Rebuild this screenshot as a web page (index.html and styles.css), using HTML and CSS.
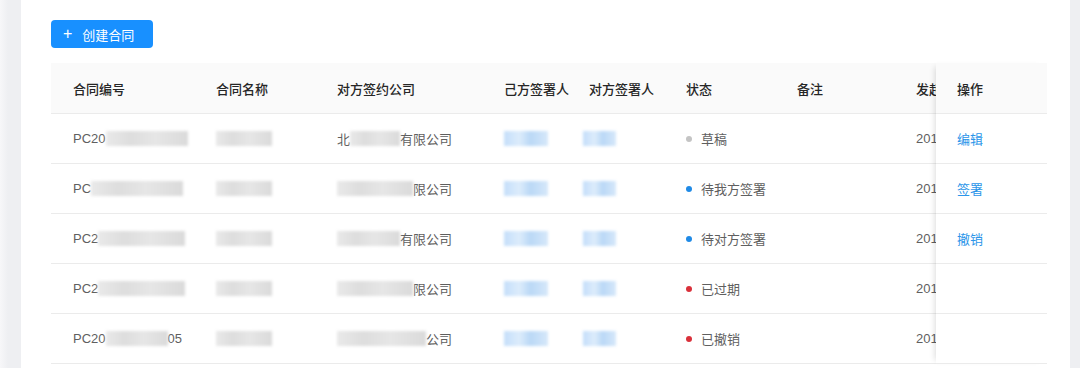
FILE: index.html
```html
<!DOCTYPE html>
<html>
<head>
	<title>合同列表</title>
	<link rel="stylesheet" href="styles.css">
</head>
<body>
<div class="card">
	<button class="btn-primary"><span class="plus">+</span>创建合同</button>

	<div class="table">
		<div class="table-main">
			<div class="row head">
				<div class="c c1">合同编号</div>
				<div class="c c2">合同名称</div>
				<div class="c c3">对方签约公司</div>
				<div class="c c4">己方签署人</div>
				<div class="c c5">对方签署人</div>
				<div class="c c6">状态</div>
				<div class="c c7">备注</div>
				<div class="c c8">发起时间</div>
			</div>
			<div class="row">
				<div class="c c1">PC20<span class="blur gray" style="width:82px"></span></div>
				<div class="c c2"><span class="blur gray" style="width:56px"></span></div>
				<div class="c c3">北<span class="blur gray" style="width:50px"></span>有限公司</div>
				<div class="c c4"><span class="blur blue" style="width:44px"></span></div>
				<div class="c c5"><span class="blur blue shift" style="width:33px"></span></div>
				<div class="c c6"><span class="dot draft"></span>草稿</div>
				<div class="c c7"></div>
				<div class="c c8">2019-03-12</div>
			</div>
			<div class="row">
				<div class="c c1">PC<span class="blur gray" style="width:92px"></span></div>
				<div class="c c2"><span class="blur gray" style="width:56px"></span></div>
				<div class="c c3"><span class="blur gray" style="width:76px"></span>限公司</div>
				<div class="c c4"><span class="blur blue" style="width:44px"></span></div>
				<div class="c c5"><span class="blur blue shift" style="width:33px"></span></div>
				<div class="c c6"><span class="dot wait"></span>待我方签署</div>
				<div class="c c7"></div>
				<div class="c c8">2019-03-11</div>
			</div>
			<div class="row">
				<div class="c c1">PC2<span class="blur gray" style="width:87px"></span></div>
				<div class="c c2"><span class="blur gray" style="width:56px"></span></div>
				<div class="c c3"><span class="blur gray" style="width:63px"></span>有限公司</div>
				<div class="c c4"><span class="blur blue" style="width:44px"></span></div>
				<div class="c c5"><span class="blur blue shift" style="width:33px"></span></div>
				<div class="c c6"><span class="dot wait"></span>待对方签署</div>
				<div class="c c7"></div>
				<div class="c c8">2019-03-10</div>
			</div>
			<div class="row">
				<div class="c c1">PC2<span class="blur gray" style="width:87px"></span></div>
				<div class="c c2"><span class="blur gray" style="width:56px"></span></div>
				<div class="c c3"><span class="blur gray" style="width:76px"></span>限公司</div>
				<div class="c c4"><span class="blur blue" style="width:44px"></span></div>
				<div class="c c5"><span class="blur blue shift" style="width:33px"></span></div>
				<div class="c c6"><span class="dot over"></span>已过期</div>
				<div class="c c7"></div>
				<div class="c c8">2019-02-28</div>
			</div>
			<div class="row">
				<div class="c c1">PC20<span class="blur gray" style="width:62px"></span>05</div>
				<div class="c c2"><span class="blur gray" style="width:56px"></span></div>
				<div class="c c3"><span class="blur gray" style="width:89px"></span>公司</div>
				<div class="c c4"><span class="blur blue" style="width:44px"></span></div>
				<div class="c c5"><span class="blur blue shift" style="width:33px"></span></div>
				<div class="c c6"><span class="dot over"></span>已撤销</div>
				<div class="c c7"></div>
				<div class="c c8">2019-02-20</div>
			</div>
		</div>

		<div class="table-fixed">
			<div class="row head"><div class="c">操作</div></div>
			<div class="row"><div class="c"><a class="link">编辑</a></div></div>
			<div class="row"><div class="c"><a class="link">签署</a></div></div>
			<div class="row"><div class="c"><a class="link">撤销</a></div></div>
			<div class="row"><div class="c"></div></div>
			<div class="row"><div class="c"></div></div>
		</div>
	</div>
</div>
</body>
</html>
```

FILE: styles.css
```css
html, body{
	margin: 0;
	height: 100%;
}
body{
	background: linear-gradient(90deg, #f7f7f9 0, #eeeff2 8px);
	font-family: "Liberation Sans", "Noto Sans CJK SC", sans-serif;
	font-size: 13px;
	color: #5f5f5f;
	overflow: hidden;
}
.card{
	background: #fff;
	margin: 0 10px 0 21px;
	height: 100%;
	padding: 20px 23px 0 30px;
	box-sizing: border-box;
}
.btn-primary{
	display: flex;
	align-items: center;
	height: 28px;
	width: 102px;
	padding: 0 0 0 12px;
	border: none;
	border-radius: 4px;
	background: #1890ff;
	color: #fff;
	font-family: inherit;
	font-size: 13px;
}
.plus{
	font-size: 16px;
	font-weight: 300;
	margin-right: 10px;
	line-height: 1;
}
.table{
	display: flex;
	margin-top: 15px;
}
.table-main{
	flex: 1;
	overflow: hidden;
}
.row{
	display: flex;
	height: 50px;
	border-bottom: 1px solid #ebebeb;
	box-sizing: border-box;
}
.row.head{
	height: 51px;
	background: #fafafa;
	color: #262626;
	font-weight: 500;
}
.c{
	display: flex;
	align-items: center;
	flex: none;
	padding-left: 22px;
	box-sizing: border-box;
	white-space: nowrap;
}
.c1{ width: 143px; }
.c2{ width: 121px; }
.c3{ width: 167px; }
.c4{ width: 85px; }
.c5{ width: 97px; }
.c6{ width: 111px; }
.c7{ width: 119px; }
.c8{ width: 42px; overflow: hidden; }
.table-fixed{
	width: 111px;
	flex: none;
	background: #fff;
	box-shadow: -5px 0 6px -4px rgba(0,0,0,.14);
	position: relative;
}
.table-fixed .c{
	padding-left: 21px;
	height: 100%;
}
.blur{
	display: inline-block;
	flex: none;
	height: 15px;
	filter: blur(1.8px);
}
.blur.gray{
	background: linear-gradient(90deg, #e9e9e9, #dddddd 30%, #e6e6e6 60%, #dadada);
}
.blur.blue{
	background: linear-gradient(90deg, #c4defa, #dcecfb 35%, #bad8f6 60%, #d6e8fa);
}
.shift{
	margin-left: -6px;
}
.dot{
	flex: none;
	width: 6px;
	height: 6px;
	border-radius: 50%;
	margin-right: 9px;
}
.dot.draft{ background: #c4c4c4; }
.dot.wait{ background: #1f8ae6; }
.dot.over{ background: #d9303a; }
.link{
	color: #2b95e9;
	cursor: pointer;
}
```
